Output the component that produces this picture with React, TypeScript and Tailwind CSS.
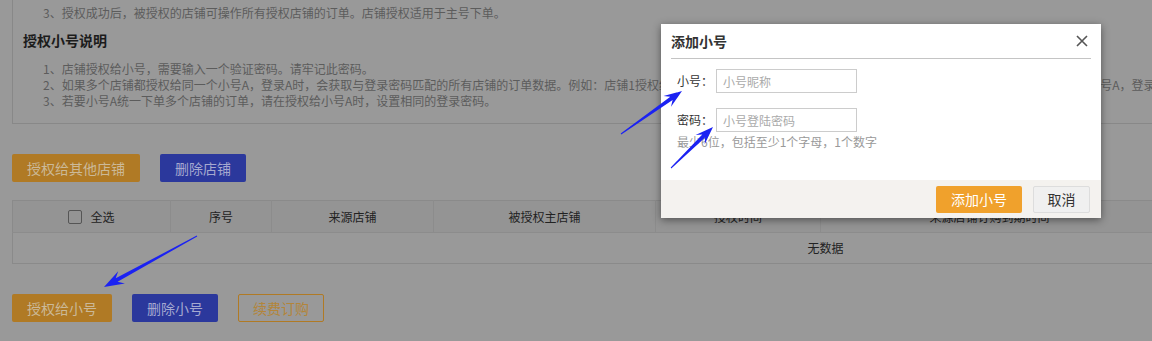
const font = "font-['Noto_Sans_CJK_SC','Noto_Sans',sans-serif]";

type Pt = [number, number];

function arrowPoints(tail: Pt, tip: Pt, headLen = 18, headW = 13, shaftW = 4) {
  const [x1, y1] = tail;
  const [x2, y2] = tip;
  const L = Math.hypot(x2 - x1, y2 - y1);
  const ux = (x2 - x1) / L;
  const uy = (y2 - y1) / L;
  const nx = -uy;
  const ny = ux;
  const neck: Pt = [x2 - ux * headLen * 0.72, y2 - uy * headLen * 0.72];
  const wing: Pt = [x2 - ux * headLen, y2 - uy * headLen];
  const pts: Pt[] = [
    [x1 + nx * 0.5, y1 + ny * 0.5],
    [neck[0] + (nx * shaftW) / 2, neck[1] + (ny * shaftW) / 2],
    [wing[0] + (nx * headW) / 2, wing[1] + (ny * headW) / 2],
    [x2, y2],
    [wing[0] - (nx * headW) / 2, wing[1] - (ny * headW) / 2],
    [neck[0] - (nx * shaftW) / 2, neck[1] - (ny * shaftW) / 2],
    [x1 - nx * 0.5, y1 - ny * 0.5],
  ];
  return pts.map((p) => `${p[0].toFixed(1)},${p[1].toFixed(1)}`).join(" ");
}

const columns = [
  { w: 158, label: "全选", check: true },
  { w: 101, label: "序号" },
  { w: 162, label: "来源店铺" },
  { w: 222, label: "被授权主店铺" },
  { w: 165, label: "授权时间" },
  { w: 338, label: "来源店铺订购到期时间" },
  { w: 480, label: "操作" },
];

function SolidButton({ children, tone }: { children: string; tone: "orange" | "blue" }) {
  const cls =
    tone === "orange"
      ? "bg-[#b07a25] text-[#cbb998]"
      : "bg-[#2b389c] text-[#a5a9d0]";
  return (
    <button className={`h-[28px] rounded-[2px] px-[15px] text-[14px] leading-[28px] ${cls}`}>
      {children}
    </button>
  );
}

export default function App() {
  return (
    <div className={`relative h-[341px] w-[1152px] overflow-hidden bg-[#999999] ${font}`}>
      <div className="w-[1700px] pl-[12px]">
        {/* 说明 */}
        <div className="w-[1626px] border-x border-b border-[#888888] pt-[5px] pb-[14px]">
          <p className="pl-[30px] text-[12px] leading-[16px] text-[#5c5c5c]">
            3、授权成功后，被授权的店铺可操作所有授权店铺的订单。店铺授权适用于主号下单。
          </p>
          <h3 className="mt-[9px] pl-[10px] text-[14px] font-bold leading-[20px] text-[#1c1c1c]">
            授权小号说明
          </h3>
          <div className="mt-[11px] pl-[30px] text-[12px] leading-[16px] text-[#5c5c5c]">
            <p>1、店铺授权给小号，需要输入一个验证密码。请牢记此密码。</p>
            <p className="whitespace-nowrap">
              2、如果多个店铺都授权给同一个小号A，登录A时，会获取与登录密码匹配的所有店铺的订单数据。例如：店铺1授权给小号A，店铺2也授权给小号A，且两个店铺均设置了相同的登录密码，则登录该小号A，登录后即可同时操作两个店铺的订单。
            </p>
            <p>3、若要小号A统一下单多个店铺的订单，请在授权给小号A时，设置相同的登录密码。</p>
          </div>
        </div>

        <div className="mt-[30px] flex gap-[20px]">
          <SolidButton tone="orange">授权给其他店铺</SolidButton>
          <SolidButton tone="blue">删除店铺</SolidButton>
        </div>

        {/* 表格 */}
        <table className="mt-[18px] w-[1626px] table-fixed border-collapse border border-[#8a8a8a] text-[12px] text-[#222222]">
          <colgroup>
            {columns.map((c) => (
              <col key={c.label} style={{ width: c.w }} />
            ))}
          </colgroup>
          <thead>
            <tr className="h-[32px] bg-[#949494]">
              {columns.map((c) => (
                <th key={c.label} className="border-r border-b border-[#8c8c8c] font-normal">
                  {c.check ? (
                    <span className="flex items-center justify-center gap-[8px]">
                      <span className="h-[14px] w-[14px] rounded-[2px] border border-[#555555]" />
                      {c.label}
                    </span>
                  ) : (
                    c.label
                  )}
                </th>
              ))}
            </tr>
          </thead>
          <tbody>
            <tr className="h-[31px]">
              <td colSpan={columns.length} className="text-center">
                无数据
              </td>
            </tr>
          </tbody>
        </table>

        <div className="mt-[30px] flex gap-[20px]">
          <SolidButton tone="orange">授权给小号</SolidButton>
          <SolidButton tone="blue">删除小号</SolidButton>
          <button className="h-[28px] rounded-[2px] border border-[#b07a25] px-[14px] text-[14px] text-[#b3853a]">
            续费订购
          </button>
        </div>
      </div>

      {/* 添加小号 弹窗 */}
      <div className="absolute left-[661px] top-[24px] w-[440px] bg-white shadow-[0_2px_8px_rgba(0,0,0,0.45)]">
        <div className="mx-[10px] flex h-[35px] items-center justify-between border-b border-[#c4c4c4]">
          <span className="text-[14px] font-bold text-[#333333]">添加小号</span>
          <svg width="12" height="12" viewBox="0 0 12 12" className="mr-[3px]">
            <path d="M1 1L11 11M11 1L1 11" stroke="#555555" strokeWidth="1.6" />
          </svg>
        </div>
        <div className="px-[16px] pt-[10px] pb-[30px] text-[12px]">
          <div className="flex items-center">
            <span className="w-[39px] shrink-0 whitespace-nowrap text-[#333333]">小号：</span>
            <input
              className="h-[24px] w-[141px] border border-[#cccccc] pl-[6px] text-[12px] outline-none placeholder:text-[#aaaaaa]"
              placeholder="小号昵称"
            />
          </div>
          <div className="mt-[15px] flex items-center">
            <span className="w-[39px] shrink-0 whitespace-nowrap text-[#333333]">密码：</span>
            <input
              className="h-[24px] w-[141px] border border-[#cccccc] pl-[6px] text-[12px] outline-none placeholder:text-[#aaaaaa]"
              placeholder="小号登陆密码"
            />
          </div>
          <p className="mt-[2px] leading-[16px] text-[#999999]">最少6位，包括至少1个字母，1个数字</p>
        </div>
        <div className="flex h-[38px] items-center justify-end gap-[11px] bg-[#f4f2ef] pr-[11px]">
          <button className="h-[27px] w-[86px] rounded-[2px] bg-[#f0a12c] text-[14px] text-white">添加小号</button>
          <button className="h-[27px] w-[57px] rounded-[2px] border border-[#dddddd] bg-[#f0f0f0] text-[14px] text-[#333333]">
            取消
          </button>
        </div>
      </div>

      {/* 标注箭头 */}
      <svg className="pointer-events-none absolute inset-0" width="1152" height="341">
        <polygon points={arrowPoints([621, 134], [682, 91])} fill="#1b22f2" />
        <polygon points={arrowPoints([671, 168], [713, 127])} fill="#1b22f2" />
        <polygon points={arrowPoints([197, 236], [104, 287], 20, 14, 4)} fill="#1b22f2" />
      </svg>
    </div>
  );
}
